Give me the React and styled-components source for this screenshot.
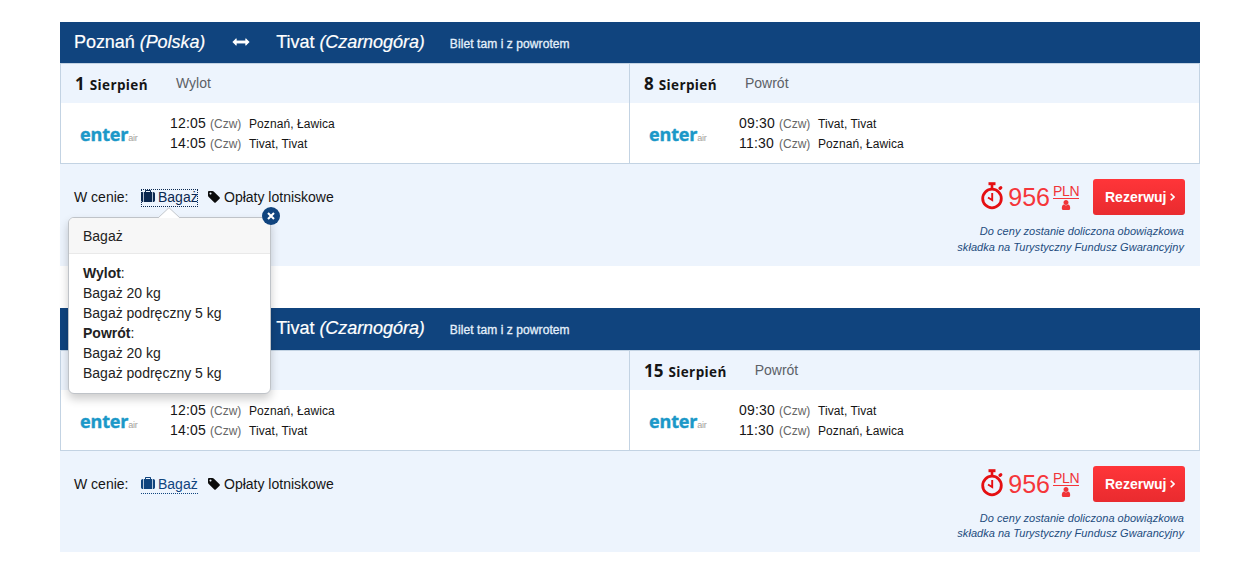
import React from 'react'
import styled, { createGlobalStyle } from 'styled-components'

const offers = [
  { out: '1', back: '8', open: true },
  { out: '8', back: '15', open: false },
]

function Flight({ day, label, rows }) {
  return (
    <Leg>
      <DateRow>
        <Day>{day}</Day>
        <Month>Sierpień</Month>
        <Direction>{label}</Direction>
      </DateRow>
      <FlightRow>
        <Logo>enter<Air>air</Air></Logo>
        <Times>
          {rows.map(([time, place]) => (
            <TimeLine key={time}>
              <Time>{time}</Time>
              <WeekDay>(Czw)</WeekDay>
              <Place>{place}</Place>
            </TimeLine>
          ))}
        </Times>
      </FlightRow>
    </Leg>
  )
}

function LuggagePopover() {
  return (
    <Popover>
      <Arrow width="22" height="12" viewBox="0 0 22 12">
        <path d="M0 11L11 0.7L22 11" fill="#fff" stroke="#c3c7cc" />
        <path d="M1 11.5H21" stroke="#f7f7f7" />
      </Arrow>
      <Close>
        <svg width="8" height="8" viewBox="0 0 8 8">
          <path d="M1 1L7 7M7 1L1 7" stroke="#fff" strokeWidth="2.1" />
        </svg>
      </Close>
      <PopoverTitle>Bagaż</PopoverTitle>
      <PopoverBody>
        <div><b>Wylot</b>:</div>
        <div>Bagaż 20 kg</div>
        <div>Bagaż podręczny 5 kg</div>
        <div><b>Powrót</b>:</div>
        <div>Bagaż 20 kg</div>
        <div>Bagaż podręczny 5 kg</div>
      </PopoverBody>
    </Popover>
  )
}

function Offer({ out, back, open }) {
  return (
    <Card>
      <Header>
        <City>Poznań <i>(Polska)</i></City>
        <ArrowIcon viewBox="0 0 18 10">
          <path
            d="M0.8 5L4.2 1.7V4H13.8V1.7L17.2 5L13.8 8.3V6H4.2V8.3Z"
            stroke="#fff"
            strokeWidth="0.9"
            strokeLinejoin="round"
          />
        </ArrowIcon>
        <City>Tivat <i>(Czarnogóra)</i></City>
        <TicketType>Bilet tam i z powrotem</TicketType>
      </Header>
      <Legs>
        <Flight day={out} label="Wylot" rows={[['12:05', 'Poznań, Ławica'], ['14:05', 'Tivat, Tivat']]} />
        <Flight day={back} label="Powrót" rows={[['09:30', 'Tivat, Tivat'], ['11:30', 'Poznań, Ławica']]} />
      </Legs>
      <Footer>
        <Included>
          <InPrice>W cenie:</InPrice>
          <Luggage $open={open}>
            <svg width="14" height="14" viewBox="0 0 1792 1792" fill="currentColor">
              <path d="M640 256h512v-128h-512v128zM288 256v1280h-64q-92 0-158-66t-66-158v-832q0-92 66-158t158-66h64zM1408 256v1280h-1024v-1280h128v-160q0-40 28-68t68-28h576q40 0 68 28t28 68v160h128zM1792 480v832q0 92-66 158t-158 66h-64v-1280h64q92 0 158 66t66 158z" />
            </svg>
            <span>Bagaż</span>
            {open && <LuggagePopover />}
          </Luggage>
          <Fees>
            <svg width="14" height="14" viewBox="0 0 1792 1792" fill="#0c0c0c">
              <path d="M576 448q0-53-37.5-90.5t-90.5-37.5-90.5 37.5-37.5 90.5 37.5 90.5 90.5 37.5 90.5-37.5 37.5-90.5zm1067 576q0 53-37 90l-491 492q-39 37-91 37-53 0-90-37l-715-716q-38-37-64.5-101t-26.5-117v-416q0-52 38-90t90-38h416q53 0 117 26.5t102 64.5l715 714q37 39 37 91z" />
            </svg>
            <span>Opłaty lotniskowe</span>
          </Fees>
        </Included>
        <Summary>
          <PriceRow>
            <Stopwatch width="24" height="28" viewBox="0 0 24 28" fill="none" stroke="#e50f12">
              <circle cx="11" cy="16.5" r="9.3" strokeWidth="2.8" />
              <path d="M7.5 1.7H14.5" strokeWidth="3" />
              <path d="M11 3V7" strokeWidth="2.6" />
              <path d="M19 6.4L19.8 5.8" strokeWidth="3.2" strokeLinecap="round" />
              <path d="M11.2 11V18L7 15.5" strokeWidth="1.9" />
            </Stopwatch>
            <Price>956</Price>
            <Unit>
              <Currency>PLN</Currency>
              <svg width="10" height="10" viewBox="256 128 1280 1536" fill="#f03438">
                <path d="M1536 1399q0 109-62.5 187t-150.5 78h-854q-88 0-150.5-78t-62.5-187q0-85 8.5-160.5t31.5-152 58.5-131 94-89 134.5-34.5q131 128 313 128t313-128q76 0 134.5 34.5t94 89 58.5 131 31.5 152 8.5 160.5zm-256-887q0 159-112.5 271.5t-271.5 112.5-271.5-112.5-112.5-271.5 112.5-271.5 271.5-112.5 271.5 112.5 112.5 271.5z" />
              </svg>
            </Unit>
            <BookBtn>
              Rezerwuj
              <svg width="5" height="8" viewBox="0 0 5 8" fill="none" stroke="#fff" strokeWidth="1.6">
                <path d="M0.7 0.7L4 4L0.7 7.3" />
              </svg>
            </BookBtn>
          </PriceRow>
          <Note>
            Do ceny zostanie doliczona obowiązkowa
            <br />
            składka na Turystyczny Fundusz Gwarancyjny
          </Note>
        </Summary>
      </Footer>
    </Card>
  )
}

export default function App() {
  return (
    <Page>
      <GlobalStyle />
      {offers.map((offer) => (
        <Offer key={offer.back} {...offer} />
      ))}
    </Page>
  )
}

const GlobalStyle = createGlobalStyle`
  * {
    box-sizing: border-box;
  }
  body {
    margin: 0;
    background: #fff;
    font-family: "Liberation Sans", Arial, sans-serif;
    font-size: 14px;
    line-height: 20px;
    color: #151515;
    overflow: hidden;
  }
  svg {
    display: block;
    flex-shrink: 0;
  }
`

const Page = styled.div`
  display: flex;
  flex-direction: column;
  gap: 42.3px;
  width: 1140px;
  margin-left: 60px;
  padding-top: 21.5px;
`

const Card = styled.section`
  display: flex;
  flex-direction: column;
  height: 244.3px;
  background: #edf4fd;
  white-space: nowrap;
`

const Header = styled.header`
  display: flex;
  align-items: center;
  height: 41.8px;
  padding: 0 14px 1px;
  background: #10447e;
  color: #fff;
`

const City = styled.span`
  font-size: 18px;
  letter-spacing: -0.05px;
  line-height: 20px;
  -webkit-text-stroke: 0.2px #fff;
`

const ArrowIcon = styled.svg`
  width: 18px;
  height: 10px;
  margin: 0 26px 0 27px;
  fill: #fff;
`

const TicketType = styled.span`
  margin: 4px 0 0 25px;
  font-size: 12px;
  letter-spacing: 0.08px;
  color: #e4f0fb;
  -webkit-text-stroke: 0.3px #e4f0fb;
`

const Legs = styled.div`
  display: flex;
  height: 101px;
  border: 1px solid #c3d3e3;
  background: #fff;
`

const Leg = styled.div`
  width: 568px;
  & + & {
    flex: 1;
    border-left: 1px solid #c3d3e3;
  }
`

const DateRow = styled.div`
  display: flex;
  align-items: baseline;
  height: 39px;
  padding: 9px 14px 0;
  background: #edf4fd;
`

const Day = styled.b`
  font-family: "Open Sans", sans-serif;
  font-size: 17px;
  line-height: 22px;
`

const Month = styled.b`
  margin: 0 28px 0 5px;
  font-family: "Open Sans", sans-serif;
  font-size: 13.5px;
  letter-spacing: 0.38px;
`

const Direction = styled.span`
  align-self: flex-start;
  color: #5c6167;
`

const FlightRow = styled.div`
  display: flex;
  height: 60px;
  padding: 10px 0 0 19px;
`

const Logo = styled.div`
  width: 90px;
  padding-top: 9px;
  font: bold 18px/24px "Open Sans", sans-serif;
  letter-spacing: -0.15px;
  color: #1b98c8;
  -webkit-text-stroke: 0.4px #1b98c8;
`

const Air = styled.span`
  font-family: "Liberation Sans", Arial, sans-serif;
  font-size: 9px;
  font-weight: normal;
  letter-spacing: -0.3px;
  color: #a3a09c;
  -webkit-text-stroke: 0;
`

const Times = styled.div`
  display: flex;
  flex-direction: column;
`

const TimeLine = styled.div`
  display: flex;
  align-items: baseline;
  height: 20px;
`

const Time = styled.span`
  width: 40px;
  letter-spacing: 0.2px;
`

const WeekDay = styled.span`
  width: 39px;
  font-size: 12px;
  color: #666;
`

const Place = styled.span`
  font-size: 12px;
  letter-spacing: 0.08px;
`

const Footer = styled.footer`
  display: flex;
  justify-content: space-between;
  flex: 1;
  padding: 15px 15px 0 14px;
`

const Included = styled.div`
  display: flex;
  align-items: flex-start;
  padding-top: 8px;
`

const InPrice = styled.span`
  width: 67px;
`

const Luggage = styled.div`
  position: relative;
  display: flex;
  align-items: center;
  gap: 3px;
  width: 57px;
  height: 18px;
  margin-top: 2px;
  padding-bottom: 1px;
  line-height: 16px;
  color: ${(p) => (p.$open ? '#0b2850' : '#10447e')};
  border-bottom: 1px dotted #10447e;
  ${(p) => p.$open && 'outline: 1px dotted #0b2850; outline-offset: -1px;'}
`

const Fees = styled.div`
  display: flex;
  align-items: center;
  gap: 3px;
  margin-left: 9px;
`

const Popover = styled.div`
  position: absolute;
  top: 28px;
  left: -73px;
  width: 203px;
  height: 177px;
  z-index: 2;
  background: #fff;
  border: 1px solid #bfc3c8;
  border-radius: 6px;
  box-shadow: 0 5px 10px rgba(0, 0, 0, 0.2);
  line-height: 20px;
  color: #222;
`

const Arrow = styled.svg`
  position: absolute;
  top: -11px;
  left: 89px;
`

const Close = styled.div`
  position: absolute;
  top: -11px;
  right: -10px;
  display: flex;
  align-items: center;
  justify-content: center;
  width: 18px;
  height: 18px;
  border-radius: 50%;
  background: #10447e;
`

const PopoverTitle = styled.div`
  height: 36px;
  padding: 8px 14px;
  background: #f7f7f7;
  border-bottom: 1px solid #e9e9e9;
  border-radius: 5px 5px 0 0;
`

const PopoverBody = styled.div`
  padding: 9px 14px;
`

const Summary = styled.div`
  display: flex;
  flex-direction: column;
  align-items: flex-end;
`

const PriceRow = styled.div`
  display: flex;
  align-items: center;
  height: 36px;
`

const Stopwatch = styled.svg`
  margin-top: -2px;
`

const Price = styled.span`
  margin: 0 3px 0 3px;
  font-size: 25px;
  line-height: 30px;
  color: #f5363a;
`

const Unit = styled.span`
  display: flex;
  flex-direction: column;
  align-items: center;
  margin: -1px 14px 0 0;
  color: #f03438;
`

const Currency = styled.span`
  width: 26px;
  height: 16px;
  font-size: 14px;
  letter-spacing: -0.3px;
  line-height: 16px;
  margin-bottom: 1px;
  border-bottom: 1px solid #f5363a;
`

const BookBtn = styled.button`
  display: flex;
  align-items: center;
  gap: 4px;
  width: 92px;
  height: 36px;
  padding: 0 0 0 12px;
  border: 0;
  border-radius: 3px;
  background: linear-gradient(#ff3539, #e92b2f);
  color: #fff;
  font: bold 14px "Liberation Sans", Arial, sans-serif;
`

const Note = styled.p`
  margin: 9px 1px 0 0;
  font-size: 11px;
  letter-spacing: 0.03px;
  font-style: italic;
  line-height: 15.6px;
  text-align: right;
  color: #234c7d;
`
